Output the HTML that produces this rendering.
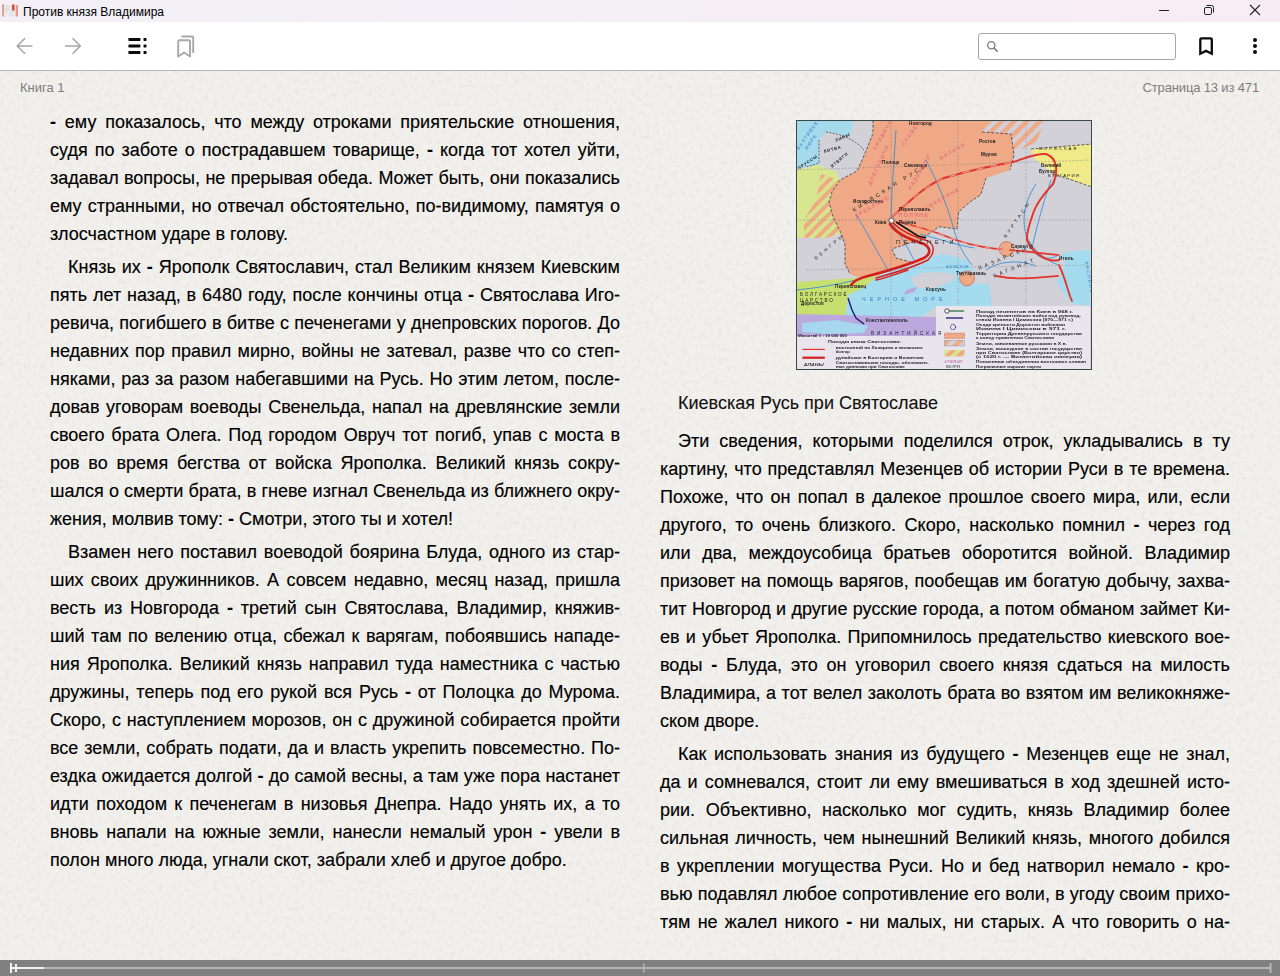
<!DOCTYPE html>
<html><head><meta charset="utf-8"><title>Против князя Владимира</title>
<style>
*{margin:0;padding:0;box-sizing:border-box}
html,body{width:1280px;height:976px;overflow:hidden;background:#efece6;font-family:"Liberation Sans",sans-serif}
#title{position:absolute;left:0;top:0;width:1280px;height:22px;background:linear-gradient(90deg,#f2f0f6 0%,#f4eef5 50%,#f8ecf4 100%)}
#title .t{position:absolute;left:23px;top:5px;font-size:12px;color:#000;line-height:14px}
#tb{position:absolute;left:0;top:22px;width:1280px;height:48px;background:#fff}
#bd{position:absolute;left:0;top:70px;width:1280px;height:1px;background:#b4b4b4}
#page{position:absolute;left:0;top:71px;width:1280px;height:889px;background:#f2f0ec;overflow:hidden}
.hdr{position:absolute;top:80px;font-size:13px;color:#7e7e7e;line-height:15px}
.ln{position:absolute;width:570px;font-size:18px;line-height:28px;color:#000;-webkit-text-stroke:0.15px #000;white-space:nowrap;text-align:justify;text-align-last:justify}
.ln.last{text-align-last:left}
.ln.ind{text-indent:18px}
.ln b{font-weight:bold}
#cap{position:absolute;left:678px;top:389px;font-size:18px;line-height:28px;color:#111;-webkit-text-stroke:0.1px #111}
#sb{position:absolute;left:0;top:960px;width:1280px;height:16px;background:#808080}
</style></head><body>
<div id="title">
 <svg style="position:absolute;left:0;top:0" width="22" height="22" viewBox="0 0 22 22">
  <rect x="2.1" y="4.2" width="2.1" height="12.3" fill="#df9d90"/>
  <rect x="4.2" y="4.5" width="6.2" height="12" fill="#ebe9ea"/>
  <rect x="10.4" y="4.5" width="5.5" height="12" fill="#e6e4e5"/>
  <rect x="5" y="6" width="4" height="0.6" fill="#cfcfcf"/><rect x="5" y="8" width="4" height="0.6" fill="#cfcfcf"/><rect x="5" y="10" width="4" height="0.6" fill="#cfcfcf"/>
  <rect x="12" y="4.5" width="2.5" height="6" fill="#d94b40"/>
  <rect x="15.8" y="5" width="2.2" height="11.5" fill="#df9d90"/>
 </svg>
 <div class="t">Против князя Владимира</div>
 <svg style="position:absolute;left:1150px;top:0" width="130" height="22" viewBox="0 0 130 22">
  <line x1="9" y1="10.5" x2="19" y2="10.5" stroke="#222" stroke-width="1"/>
  <rect x="54.5" y="7.5" width="7" height="7" rx="1.4" fill="none" stroke="#222" stroke-width="1"/>
  <path d="M56.5 5.5 h5 a2 2 0 0 1 2 2 v5" fill="none" stroke="#222" stroke-width="1"/>
  <path d="M100 5 L110 15 M110 5 L100 15" stroke="#222" stroke-width="1.1"/>
 </svg>
</div>
<div id="tb">
 <svg style="position:absolute;left:0;top:0" width="220" height="48" viewBox="0 0 220 48">
  <path d="M32.5 24 H17.5 M25 16.2 L17.2 24 L25 31.8" fill="none" stroke="#a6a6a6" stroke-width="1.5"/>
  <path d="M65 24 H80 M72.5 16.2 L80.3 24 L72.5 31.8" fill="none" stroke="#a6a6a6" stroke-width="1.5"/>
  <rect x="128.4" y="16" width="12" height="2.9" rx="0.6" fill="#0a0a0a"/>
  <rect x="128.4" y="22.5" width="12" height="2.9" rx="0.6" fill="#0a0a0a"/>
  <rect x="128.4" y="29" width="12" height="2.9" rx="0.6" fill="#0a0a0a"/>
  <rect x="143.5" y="16" width="3" height="2.9" rx="0.6" fill="#0a0a0a"/>
  <rect x="143.5" y="22.5" width="3" height="2.9" rx="0.6" fill="#0a0a0a"/>
  <rect x="143.5" y="29" width="3" height="2.9" rx="0.6" fill="#0a0a0a"/>
  <path d="M178.2 34.6 V19.2 Q178.2 18.2 179.2 18.2 H189 Q190 18.2 190 19.2 V34.6 L184.1 30.4 Z" fill="none" stroke="#a8a8a8" stroke-width="1.9" stroke-linejoin="round"/>
  <path d="M181.5 14.5 H192.2 Q193.2 14.5 193.2 15.5 V31" fill="none" stroke="#a8a8a8" stroke-width="1.9"/>
 </svg>
 <div style="position:absolute;left:978px;top:11px;width:198px;height:27px;border:1px solid #a6a6a6;border-radius:3px;background:#fff"></div>
 <svg style="position:absolute;left:985px;top:16px" width="16" height="16" viewBox="0 0 16 16">
  <circle cx="6.3" cy="7.3" r="3.6" fill="none" stroke="#7c7c7c" stroke-width="1.3"/>
  <path d="M8.9 9.9 L12.7 13.7" stroke="#7c7c7c" stroke-width="1.6"/>
 </svg>
 <svg style="position:absolute;left:1190px;top:10px" width="90" height="28" viewBox="0 0 90 28">
  <path d="M10.3 21.7 V7.6 Q10.3 6.4 11.5 6.4 H20.6 Q21.8 6.4 21.8 7.6 V21.7 L16.05 18.9 Z" fill="none" stroke="#0a0a0a" stroke-width="2.3" stroke-linejoin="miter"/>
  <circle cx="65" cy="8.1" r="2" fill="#0a0a0a"/>
  <circle cx="65" cy="14.1" r="2" fill="#0a0a0a"/>
  <circle cx="65" cy="20.1" r="2" fill="#0a0a0a"/>
 </svg>
</div>
<div id="bd"></div>
<div id="page"><svg width="1280" height="889" style="position:absolute;left:0;top:0"><filter id="nz" x="0" y="0" width="100%" height="100%"><feTurbulence type="fractalNoise" baseFrequency="0.22" numOctaves="2" seed="7" result="t"/><feColorMatrix in="t" type="matrix" values="0 0 0 0 0.45  0 0 0 0 0.42  0 0 0 0 0.38  2.2 0 0 0 -1.05"/></filter><rect width="1280" height="889" filter="url(#nz)" opacity="0.16"/></svg></div>
<div class="hdr" style="left:20px">Книга 1</div>
<div class="hdr" style="right:21px;letter-spacing:-0.15px">Страница 13 из 471</div>
<div id="map" style="position:absolute;left:796px;top:120px;width:296px;height:250px;background:#d3d1d8;filter:blur(0.35px)"><svg width="296" height="250" viewBox="0 0 296 250" style="display:block;font-family:'Liberation Sans',sans-serif">
<defs>
<pattern id="st1" patternUnits="userSpaceOnUse" width="9" height="9" patternTransform="rotate(45)"><rect width="9" height="9" fill="#d3d0d8"/><rect width="4.5" height="9" fill="#efa986"/></pattern>
<pattern id="st2" patternUnits="userSpaceOnUse" width="8" height="8" patternTransform="rotate(45)"><rect width="8" height="8" fill="#d6e58a"/><rect width="4" height="8" fill="#efa986"/></pattern>
</defs>
<rect width="296" height="250" fill="#d3d1d8"/>
<path d="M0 0 H56 L56 10 L52 17 L40 13 L30 12 L23 20 L23 43 L10 47 L0 48 Z" fill="#a5d9ec"/>
<g fill="none" stroke="#333" stroke-width="0.7" stroke-dasharray="2 1.4"><path d="M23 20 L23 43 L10 47 M30 12 C45 14 60 20 68 30"/></g>
<g font-size="4.2" fill="#222" font-weight="bold" letter-spacing="0.8"><text x="28" y="33" transform="rotate(-15 28 33)">ЛИТВА</text><text x="3" y="50" transform="rotate(-35 3 50)">ПРУССЫ</text><text x="36" y="48" transform="rotate(-40 36 48)">ЯТВЯГИ</text><text x="40" y="22" transform="rotate(-25 40 22)">ЛИВЫ</text></g>
<path d="M181 0 H250 L240 22 L215 35 L190 40 Z" fill="url(#st1)"/>
<path d="M77 0 H190 L186 12 L215 14 L218 35 L214 50 L190 58 L184.7 74.8 L174 82 L162.6 92 L161 109 L143 106.7 L125.6 119 L96 129 L100 138 L118 143 L104.7 146 L81 156 L61 157 L54 154 L49 144 L49 125 L45 113 L37 97 L33 82 L36 72 L44 60 L61 51 L67 38 L72 26 L77 13 Z" fill="#efa986"/>
<path d="M0 50 L22 45 L40 52 L44 60 L36 72 L33 82 L37 97 L45 113 L30 118 L0 118 Z" fill="#d8e78f"/>
<path d="M25 54 L43 60 L36 72 L33 82 L37 97 L45 113 L30 118 L8 118 L8 100 L20 80 Z" fill="url(#st2)"/>
<path d="M235 29 L296 24 V67 L276 60 L257 54 L238 38 Z" fill="#f1ea88"/>
<path d="M81 156 L104.7 146 L123 145 L138 136 L150 134 L170 140 L178 150 L172 153 L162 156 L168 163 L193 164 L196 186 L140 186 L125 198 L100 201 L49 197 L52 175 L67 168 Z" fill="#a5dbee"/>
<path d="M114.6 158 L125 153 L140 152 L160 154 L158 160 L140 168 L120 168 Z" fill="#d3d1d8"/>
<path d="M263 135 L276 131 L294 130 V186 L276 184 L261 163 L270 142 Z" fill="#a5dbee"/>
<path d="M0 162 L61 158 L81 156 L67 168 L52 175 L49 197 L0 197 Z" fill="#c6df6e"/>
<path d="M0 194 L140 197 L140 217 L0 217 Z" fill="#baa8de"/>
<path d="M6 203 L40 200 L72 206 L68 213 L30 214 L6 212 Z" fill="#a6d7ee"/>
<path d="M110 170 L122 167 L118 172 L108 175 Z" fill="#baa8de"/>
<circle cx="210.5" cy="129" r="7.4" fill="#efa986" stroke="#b55a45" stroke-width="0.6"/>
<circle cx="171" cy="158.4" r="7.4" fill="#efa986" stroke="#b55a45" stroke-width="0.6"/>
<rect x="0" y="216" width="140" height="34" fill="#e8e6ec"/>
<rect x="140" y="186" width="154" height="64" fill="#e8e6ec"/>
<g fill="none" stroke="#3c3c44" stroke-width="0.8" stroke-dasharray="3 1.6">
<path d="M77 0 L77 13 L72 26 L67 38 L61 51 L44 60 L36 72 L33 82 L37 97 L45 113 L49 125 L49 144 L54 154"/>
<path d="M190 58 L184.7 74.8 L174 82 L162.6 92 L161 109 L143 106.7 L125.6 119 L96 129 L100 138 L118 143"/>
<path d="M235 29 L296 24 M257 54 L276 60 L296 67"/>
<path d="M186 12 L215 14 L218 35 L214 50"/>
</g>
<g fill="none" stroke="#7f7f8c" stroke-width="0.45" stroke-dasharray="2 1.5">
<path d="M95 0 V200 M0 100 H296 M162 0 V186 M230 0 V186 M0 50 L296 40 M10 150 L296 145"/>
</g>
<g fill="none" stroke="#3b8fd2" stroke-width="0.9">
<path d="M100 10 L98 40 L96 70 L95 101 L110 125 L118 140"/>
<path d="M60 95 C70 110 80 130 92 150"/>
<path d="M130 40 C140 60 150 80 158 110 C162 125 168 135 176 145"/>
<path d="M240 64 C230 80 225 95 230 115 C236 130 250 140 262 145"/>
<path d="M255 60 C245 90 240 110 236 128 C240 140 256 140 262 135"/>
<path d="M190 150 C205 140 225 140 240 146"/>
<path d="M0 170 C20 168 40 165 60 160"/>
<path d="M124 114 C140 118 160 125 178 128"/>
</g>
<g fill="none" stroke-linecap="round">
<path d="M97 96 C115 80 130 65 148 58 C175 50 200 45 217 42 C230 38 240 33 250 34 C262 38 262 52 257 64" stroke="#e2352c" stroke-width="2"/>
<path d="M97 96 C115 80 130 65 148 58 C175 50 200 45 217 42" stroke="#fff" stroke-width="0.6" stroke-dasharray="6 8"/>
<path d="M257 64 C250 72 242 80 237.6 92 C233 105 230 115 231 120 C236 132 250 143 263 140" stroke="#e2352c" stroke-width="2"/>
<path d="M263 145 C270 160 272 172 276 181" stroke="#e2352c" stroke-width="1.8"/>
<path d="M200 156 C220 160 240 158 262 156" stroke="#e2352c" stroke-width="1.8"/>
<path d="M214 130 C235 132 250 134 263 135" stroke="#e2352c" stroke-width="1.6"/>
<path d="M97 101 C120 105 140 112 160 120 C180 127 200 129 206 129" stroke="#e2352c" stroke-width="1.6"/>
<path d="M97 101 C120 105 140 112 160 120 C180 127 200 129 206 129" stroke="#fff" stroke-width="0.5" stroke-dasharray="5 7"/>
<path d="M94 104 C100 114 115 120 128 124 C135 128 135 134 128 138 C112 145 95 150 72 156 C64 158 58 160 55 165" stroke="#d4201c" stroke-width="2.6"/>
<path d="M97 103 C106 112 118 117 132 121 C139 125 139 133 132 140 C116 148 98 153 80 158" stroke="#d4201c" stroke-width="1.4"/>
<path d="M80 160 C90 158 100 154 112 150" stroke="#d4201c" stroke-width="1.4"/>
</g>
<path d="M100 102 L122 116 L130 118" fill="none" stroke="#111" stroke-width="1.6"/>
<path d="M52 178 L56 190 L60 198 L68 204" fill="none" stroke="#1b1b6e" stroke-width="1.4"/>
<circle cx="95.5" cy="100.6" r="2.6" fill="#f4f0e8" stroke="#333" stroke-width="0.8"/>
<g font-size="4.6" fill="#222" font-weight="bold" letter-spacing="0.1">
<text x="113" y="4.5">Новгород</text><text x="86" y="44">Полоцк</text><text x="108" y="47">Смоленск</text>
<text x="57" y="83">Искоростень</text><text x="79" y="103.5">Киев</text><text x="103" y="91">Переяславль</text><text x="103" y="104">Родень</text>
<text x="183" y="23">Ростов</text><text x="185" y="36">Муром</text><text x="245" y="47">Великий</text><text x="243" y="52.5">Булгар</text>
<text x="215" y="128">Саркел</text><text x="160" y="155">Тмутаракань</text><text x="130" y="171">Корсунь</text>
<text x="39" y="168">Переяславец</text><text x="5" y="185">Доростол</text><text x="70" y="202">Константинополь</text><text x="263" y="140">Итиль</text>
</g>
<g font-size="5.5" fill="#222" letter-spacing="3.2">
<text x="58" y="92" transform="rotate(-32 58 92)">КИЕВСКАЯ РУСЬ</text>
<text x="183" y="150" transform="rotate(-22 183 150)">ХАЗАРСКИЙ</text>
<text x="198" y="158" transform="rotate(-22 198 158)">КАГАНАТ</text>
<text x="100" y="124" letter-spacing="4">ПЕЧЕНЕГИ</text>
<text x="4" y="176" font-size="4.6" letter-spacing="1.8">БОЛГАРСКОЕ</text>
<text x="4" y="182" font-size="4.6" letter-spacing="1.8">ЦАРСТВО</text>
<text x="252" y="57" font-size="4.4" letter-spacing="1.2">БУЛГАРИЯ</text>
<text x="243" y="30" font-size="4.4" letter-spacing="1.8">ВОЛЖСКАЯ</text>
<text x="75" y="215" font-size="4.6" letter-spacing="3">ВИЗАНТИЙСКАЯ</text>
<text x="20" y="140" transform="rotate(-40 20 140)" font-size="4.6">ВЕНГРЫ</text>
<text x="210" y="118" transform="rotate(-55 210 118)" font-size="4.6">БУРТАСЫ</text>
</g>
<g font-size="5.5" fill="#2f7fc8" letter-spacing="4">
<text x="66" y="181">ЧЕРНОЕ МОРЕ</text>
<text x="3" y="30" transform="rotate(-55 3 30)" font-size="4.6" letter-spacing="1.2">БАЛТИЙСКОЕ</text><text x="11" y="30" transform="rotate(-55 11 30)" font-size="4.6" letter-spacing="1.2">МОРЕ</text>
<text x="289" y="142" transform="rotate(80 289 142)" font-size="4.6" letter-spacing="1.5">КАСПИЙСКОЕ МОРЕ</text>
<text x="150" y="148" font-size="3.8" letter-spacing="0.3">АЗОВСКОЕ</text>
</g>
<g font-size="5" fill="#e05a7a" letter-spacing="1.5">
<text x="80" y="30" transform="rotate(-60 80 30)">КРИВИЧИ</text><text x="108" y="26" transform="rotate(-55 108 26)">СЛОВЕНЕ</text>
<text x="60" y="98" transform="rotate(-30 60 98)">ДРЕВЛЯНЕ</text><text x="75" y="65" transform="rotate(-65 75 65)">ДРЕГОВИЧИ</text>
<text x="115" y="70" transform="rotate(-60 115 70)">РАДИМИЧИ</text><text x="130" y="90" transform="rotate(-30 130 90)">СЕВЕРЯНЕ</text>
<text x="145" y="40" transform="rotate(-30 145 40)">ВЯТИЧИ</text><text x="103" y="97">ПОЛЯНЕ</text>
</g>
<g>
<path d="M150 191 H168" stroke="#1e6a30" stroke-width="1.2"/><circle cx="151" cy="191" r="2.2" fill="#fff" stroke="#222" stroke-width="0.8"/>
<path d="M150 198 H167" stroke="#1b1b6e" stroke-width="1.3"/>
<circle cx="157" cy="207" r="2.6" fill="none" stroke="#1b1b6e" stroke-width="1" stroke-dasharray="1.6 0.8"/>
<rect x="148.5" y="213" width="20" height="5.5" fill="#efa986" stroke="#b44" stroke-width="0.4" stroke-dasharray="2 1"/>
<rect x="148.5" y="220.4" width="20" height="5.6" fill="url(#st1)" stroke="#888" stroke-width="0.4"/>
<rect x="148.5" y="230" width="20" height="6.4" fill="url(#st2)"/>
<text x="148" y="243" font-size="4" fill="#c05aa0" font-style="italic" textLength="18" lengthAdjust="spacingAndGlyphs">УЛИЧИ</text>
<text x="150" y="247.5" font-size="4" fill="#333" textLength="14" lengthAdjust="spacingAndGlyphs">МОРЯ</text>
</g>
<g font-size="4" fill="#1e1e24" font-weight="bold" lengthAdjust="spacingAndGlyphs">
<text x="180" y="192.5" textLength="97" lengthAdjust="spacingAndGlyphs">Поход печенегов на Киев в 968 г.</text>
<text x="180" y="197" textLength="105" lengthAdjust="spacingAndGlyphs">Походы византийских войск под руковод-</text>
<text x="180" y="201.4" textLength="97" lengthAdjust="spacingAndGlyphs">ством Иоанна I Цимисхия (970—971 г.)</text>
<text x="180" y="206" textLength="89" lengthAdjust="spacingAndGlyphs">Осада крепости Доростол войсками</text>
<text x="180" y="210.4" textLength="90" lengthAdjust="spacingAndGlyphs">Иоанна I Цимисхия в 971 г.</text>
<text x="180" y="214.9" textLength="106" lengthAdjust="spacingAndGlyphs">Территория Древнерусского государства</text>
<text x="180" y="218.8" textLength="78" lengthAdjust="spacingAndGlyphs">к концу правления Святослава</text>
<text x="180" y="225.2" textLength="91" lengthAdjust="spacingAndGlyphs">Земли, завоеванные русскими в X в.</text>
<text x="180" y="229.6" textLength="106" lengthAdjust="spacingAndGlyphs">Земли, вошедшие в состав государства</text>
<text x="180" y="234" textLength="106" lengthAdjust="spacingAndGlyphs">при Святославе (Болгарское царство)</text>
<text x="180" y="238" textLength="106" lengthAdjust="spacingAndGlyphs">(с 1020 г. — Византийская империя)</text>
<text x="180" y="243" textLength="110" lengthAdjust="spacingAndGlyphs">Племенные объединения восточных славян</text>
<text x="180" y="247.6" textLength="65" lengthAdjust="spacingAndGlyphs">Пограничные морские порты</text>
<text x="32" y="223.2" textLength="73" lengthAdjust="spacingAndGlyphs">Походы князя Святослава:</text>
<text x="39.7" y="229" textLength="87" lengthAdjust="spacingAndGlyphs">восточный на Хазарию и волжских</text>
<text x="39.7" y="232.9" textLength="14" lengthAdjust="spacingAndGlyphs">болгар</text>
<text x="39.7" y="238.6" textLength="88" lengthAdjust="spacingAndGlyphs">дунайские в Болгарию и Византию</text>
<text x="39.7" y="243.8" textLength="93" lengthAdjust="spacingAndGlyphs">Святославовские походы, обозначен-</text>
<text x="39.7" y="247.6" textLength="69" lengthAdjust="spacingAndGlyphs">ные данными при Святославе</text>
<text x="2" y="216.8" font-size="3.6" textLength="49" lengthAdjust="spacingAndGlyphs">Масштаб 1 : 19 000 000</text>
</g>
<g fill="none"><path d="M6.4 229.4 H28.8" stroke="#e2352c" stroke-width="1.2"/><path d="M6.4 237.7 H28.8" stroke="#d4201c" stroke-width="2.2"/></g>
<text x="7.7" y="246" font-size="4" fill="#333" font-style="italic" font-weight="bold" textLength="20" lengthAdjust="spacingAndGlyphs">АЛАНЫ</text>
<rect x="0.5" y="0.5" width="295" height="249" fill="none" stroke="#37474a" stroke-width="1"/>
</svg>
</div>
<div id="cap">Киевская Русь при Святославе</div>
<div class="ln" style="left:50px;top:108px"><b>-</b> ему показалось, что между отроками приятельские отношения,</div>
<div class="ln" style="left:50px;top:136px">судя по заботе о пострадавшем товарище, <b>-</b> когда тот хотел уйти,</div>
<div class="ln" style="left:50px;top:164px">задавал вопросы, не прерывая обеда. Может быть, они показались</div>
<div class="ln" style="left:50px;top:192px">ему странными, но отвечал обстоятельно, по-видимому, памятуя о</div>
<div class="ln last" style="left:50px;top:220px">злосчастном ударе в голову.</div>
<div class="ln ind" style="left:50px;top:253px">Князь их <b>-</b> Ярополк Святославич, стал Великим князем Киевским</div>
<div class="ln" style="left:50px;top:281px">пять лет назад, в 6480 году, после кончины отца <b>-</b> Святослава Иго-</div>
<div class="ln" style="left:50px;top:309px">ревича, погибшего в битве с печенегами у днепровских порогов. До</div>
<div class="ln" style="left:50px;top:337px">недавних пор правил мирно, войны не затевал, разве что со степ-</div>
<div class="ln" style="left:50px;top:365px">няками, раз за разом набегавшими на Русь. Но этим летом, после-</div>
<div class="ln" style="left:50px;top:393px">довав уговорам воеводы Свенельда, напал на древлянские земли</div>
<div class="ln" style="left:50px;top:421px">своего брата Олега. Под городом Овруч тот погиб, упав с моста в</div>
<div class="ln" style="left:50px;top:449px">ров во время бегства от войска Ярополка. Великий князь сокру-</div>
<div class="ln" style="left:50px;top:477px">шался о смерти брата, в гневе изгнал Свенельда из ближнего окру-</div>
<div class="ln last" style="left:50px;top:505px">жения, молвив тому: <b>-</b> Смотри, этого ты и хотел!</div>
<div class="ln ind" style="left:50px;top:538px">Взамен него поставил воеводой боярина Блуда, одного из стар-</div>
<div class="ln" style="left:50px;top:566px">ших своих дружинников. А совсем недавно, месяц назад, пришла</div>
<div class="ln" style="left:50px;top:594px">весть из Новгорода <b>-</b> третий сын Святослава, Владимир, княжив-</div>
<div class="ln" style="left:50px;top:622px">ший там по велению отца, сбежал к варягам, побоявшись нападе-</div>
<div class="ln" style="left:50px;top:650px">ния Ярополка. Великий князь направил туда наместника с частью</div>
<div class="ln" style="left:50px;top:678px">дружины, теперь под его рукой вся Русь <b>-</b> от Полоцка до Мурома.</div>
<div class="ln" style="left:50px;top:706px">Скоро, с наступлением морозов, он с дружиной собирается пройти</div>
<div class="ln" style="left:50px;top:734px">все земли, собрать подати, да и власть укрепить повсеместно. По-</div>
<div class="ln" style="left:50px;top:762px">ездка ожидается долгой <b>-</b> до самой весны, а там уже пора настанет</div>
<div class="ln" style="left:50px;top:790px">идти походом к печенегам в низовья Днепра. Надо унять их, а то</div>
<div class="ln" style="left:50px;top:818px">вновь напали на южные земли, нанесли немалый урон <b>-</b> увели в</div>
<div class="ln last" style="left:50px;top:846px">полон много люда, угнали скот, забрали хлеб и другое добро.</div>
<div class="ln ind" style="left:660px;top:427px">Эти сведения, которыми поделился отрок, укладывались в ту</div>
<div class="ln" style="left:660px;top:455px">картину, что представлял Мезенцев об истории Руси в те времена.</div>
<div class="ln" style="left:660px;top:483px">Похоже, что он попал в далекое прошлое своего мира, или, если</div>
<div class="ln" style="left:660px;top:511px">другого, то очень близкого. Скоро, насколько помнил <b>-</b> через год</div>
<div class="ln" style="left:660px;top:539px">или два, междоусобица братьев оборотится войной. Владимир</div>
<div class="ln" style="left:660px;top:567px">призовет на помощь варягов, пообещав им богатую добычу, захва-</div>
<div class="ln" style="left:660px;top:595px">тит Новгород и другие русские города, а потом обманом займет Ки-</div>
<div class="ln" style="left:660px;top:623px">ев и убьет Ярополка. Припомнилось предательство киевского вое-</div>
<div class="ln" style="left:660px;top:651px">воды <b>-</b> Блуда, это он уговорил своего князя сдаться на милость</div>
<div class="ln" style="left:660px;top:679px">Владимира, а тот велел заколоть брата во взятом им великокняже-</div>
<div class="ln last" style="left:660px;top:707px">ском дворе.</div>
<div class="ln ind" style="left:660px;top:740px">Как использовать знания из будущего <b>-</b> Мезенцев еще не знал,</div>
<div class="ln" style="left:660px;top:768px">да и сомневался, стоит ли ему вмешиваться в ход здешней исто-</div>
<div class="ln" style="left:660px;top:796px">рии. Объективно, насколько мог судить, князь Владимир более</div>
<div class="ln" style="left:660px;top:824px">сильная личность, чем нынешний Великий князь, многого добился</div>
<div class="ln" style="left:660px;top:852px">в укреплении могущества Руси. Но и бед натворил немало <b>-</b> кро-</div>
<div class="ln" style="left:660px;top:880px">вью подавлял любое сопротивление его воли, в угоду своим прихо-</div>
<div class="ln" style="left:660px;top:908px">тям не жалел никого <b>-</b> ни малых, ни старых. А что говорить о на-</div>
<div id="sb">
 <svg width="1280" height="16" viewBox="0 0 1280 16">
  <rect x="12" y="7" width="1258" height="2" fill="#b4b4b4"/>
  <rect x="12" y="7" width="32" height="2" fill="#f0f0f0"/>
  <rect x="10" y="3" width="2" height="10" fill="#f0f0f0"/>
  <rect x="15" y="4" width="2" height="8" fill="#f0f0f0"/>
  <rect x="643" y="3.5" width="1.5" height="9" fill="#b4b4b4"/>
  <rect x="1269.5" y="3" width="2" height="10" fill="#b4b4b4"/>
 </svg>
</div>
</body></html>
